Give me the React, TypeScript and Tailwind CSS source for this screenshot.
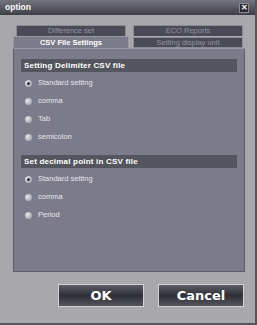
import { useState } from "react";

const delimiterOptions = ["Standard setting", "comma", "Tab", "semicolon"];
const decimalOptions = ["Standard setting", "comma", "Period"];

function Radio({ label, checked, onClick }: { label: string; checked: boolean; onClick: () => void }) {
    return (
        <div className="h-[18px] flex items-center cursor-pointer" onClick={onClick}>
            <div className="ml-[4px] w-[7px] h-[7px] rounded-full bg-[radial-gradient(circle_at_35%_35%,#e4e4ea,#a8a8b2_75%)] flex items-center justify-center">
                {checked && <div className="w-[3px] h-[3px] rounded-full bg-[#33333a]"></div>}
            </div>
            <span className="ml-[6px] text-[7.5px] text-[#e6e6ec] font-['Liberation_Sans',sans-serif]">{label}</span>
        </div>
    );
}

function SectionHeader({ title }: { title: string }) {
    return (
        <div className="h-[13px] bg-[#55555f] flex items-center pl-[3px]">
            <span className="text-[8px] font-bold text-white font-['Liberation_Sans',sans-serif] tracking-[0.2px]">{title}</span>
        </div>
    );
}

function App() {
    const [delimiter, setDelimiter] = useState(0);
    const [decimal, setDecimal] = useState(0);

    return (
        <div className="w-[257px] h-[325px] bg-[#a7a7ac] flex flex-col border-r-2 border-b-2 border-[#55555c] font-['Liberation_Sans',sans-serif]">

            {/* Title bar */}

            <div className="h-[15px] bg-gradient-to-b from-[#75757f] to-[#3f3f48] flex items-center justify-between px-[5px]">
                <span className="text-[8.5px] font-bold text-white">option</span>
                <div className="w-[10px] h-[10px] mr-[1px] bg-[#2a2a30] border border-[#8a8a92] flex items-center justify-center text-white text-[8px] font-bold leading-none">✕</div>
            </div>

            {/* Tabs */}

            <div className="pl-[13px] pt-[10px] flex flex-col">
                <div className="flex h-[11px] gap-[7px] pl-[3px]">
                    <div className="w-[110px] bg-[#4b4b57] border border-[#8c8c95] border-b-0 flex items-center justify-center text-[7.5px] text-[#9494a0]">Difference set</div>
                    <div className="w-[110px] bg-[#4b4b57] border border-[#8c8c95] border-b-0 flex items-center justify-center text-[7.5px] text-[#9494a0]">ECO Reports</div>
                </div>
                <div className="flex h-[12px] gap-[4px]">
                    <div className="w-[116px] h-[12px] bg-[#7b7b89] border border-[#9a9aa4] border-b-0 flex items-center justify-center text-[7.5px] font-bold text-white">CSV File Settings</div>
                    <div className="w-[110px] h-[11px] mt-[1px] bg-[#4b4b57] border border-[#8c8c95] flex items-center justify-center text-[7.5px] text-[#9494a0]">Setting display unit</div>
                </div>
            </div>

            {/* Panel */}

            <div className="ml-[13px] w-[232px] h-[224px] bg-[#7b7b89] border border-[#5c5c66] border-t-[#9a9aa4] px-[7px] pt-[10px]">
                <SectionHeader title="Setting Delimiter CSV file" />
                <div className="mt-[2px] flex flex-col">
                    {delimiterOptions.map((o, i) => (
                        <Radio key={o} label={o} checked={delimiter === i} onClick={() => setDelimiter(i)} />
                    ))}
                </div>
                <div className="mt-[9px]">
                    <SectionHeader title="Set decimal point in CSV file" />
                </div>
                <div className="mt-[2px] flex flex-col">
                    {decimalOptions.map((o, i) => (
                        <Radio key={o} label={o} checked={decimal === i} onClick={() => setDecimal(i)} />
                    ))}
                </div>
            </div>

            {/* Buttons */}

            <div className="mt-[12px] flex justify-end gap-[14px] pr-[11px]">
                <div className="cursor-pointer w-[86px] h-[23px] border border-[#d2d2d6] bg-gradient-to-b from-[#5e5e68] via-[#2f2f37] to-[#55555f] flex items-center justify-center">
                    <span className="text-[13px] font-bold text-white font-['DejaVu_Sans',sans-serif]">OK</span>
                </div>
                <div className="cursor-pointer w-[86px] h-[23px] border border-[#d2d2d6] bg-gradient-to-b from-[#5e5e68] via-[#2f2f37] to-[#55555f] flex items-center justify-center">
                    <span className="text-[13px] font-bold text-white font-['DejaVu_Sans',sans-serif]">Cancel</span>
                </div>
            </div>
        </div>
    )
}

export default App;
